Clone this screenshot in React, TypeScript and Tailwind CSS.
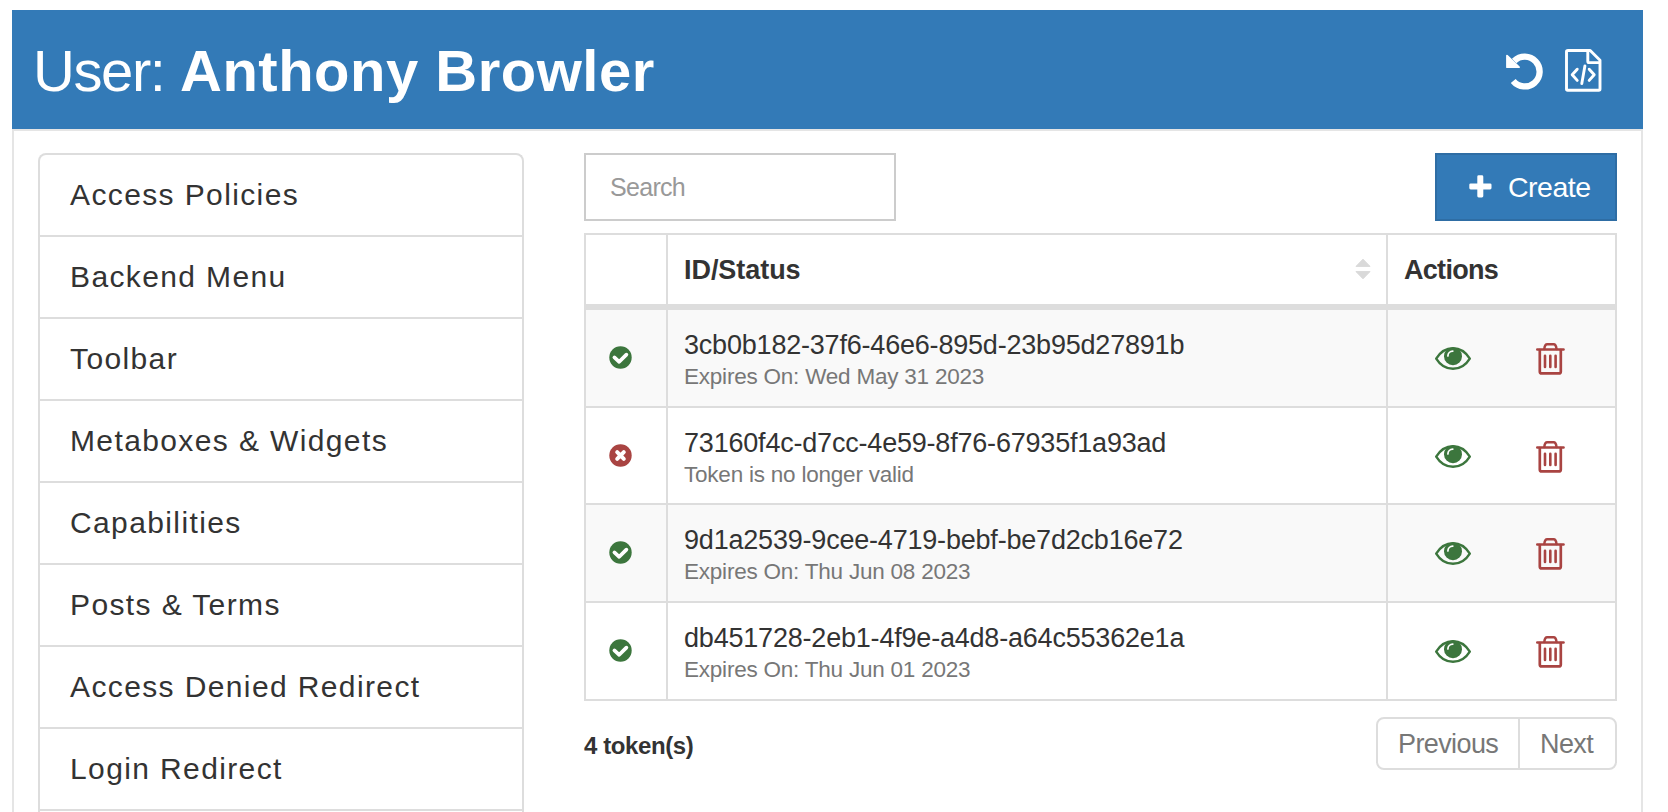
import type { ReactNode } from "react";

const menu = [
  "Access Policies",
  "Backend Menu",
  "Toolbar",
  "Metaboxes & Widgets",
  "Capabilities",
  "Posts & Terms",
  "Access Denied Redirect",
  "Login Redirect",
];

type Token = { id: string; note: string; valid: boolean; height: string };

const tokens: Token[] = [
  { id: "3cb0b182-37f6-46e6-895d-23b95d27891b", note: "Expires On: Wed May 31 2023", valid: true, height: "h-[98px]" },
  { id: "73160f4c-d7cc-4e59-8f76-67935f1a93ad", note: "Token is no longer valid", valid: false, height: "h-[97px]" },
  { id: "9d1a2539-9cee-4719-bebf-be7d2cb16e72", note: "Expires On: Thu Jun 08 2023", valid: true, height: "h-[98px]" },
  { id: "db451728-2eb1-4f9e-a4d8-a64c55362e1a", note: "Expires On: Thu Jun 01 2023", valid: true, height: "h-[98px]" },
];

function UndoIcon() {
  return (
    <svg className="h-[37px] w-[37px]" viewBox="0 0 37 37" fill="none">
      <path d="M8.2 8A14.9 14.9 0 1 1 7.2 28" stroke="#fff" strokeWidth="6.3" />
      <path d="M1 2.6v11.6h12z" fill="#fff" stroke="#fff" strokeWidth="1.8" strokeLinejoin="round" />
    </svg>
  );
}

function CodeFileIcon() {
  return (
    <svg
      className="h-[43px] w-[37px]"
      viewBox="0 0 37 43"
      fill="none"
      stroke="#fff"
      strokeWidth="2.9"
      strokeLinecap="round"
      strokeLinejoin="round"
    >
      <path d="M3 1.5H25.2L35 11.2V40Q35 41.2 33.8 41.2H2.7Q1.5 41.2 1.5 40V2.7Q1.5 1.5 3 1.5Z" />
      <path d="M22.8 1.6V12.2Q22.8 13.6 24.2 13.6H34.6" />
      <path d="M12.2 20.2L7.2 25.8L12.2 31.4M24.2 20.2L29.2 25.8L24.2 31.4M19.9 17L16.8 34.6" />
    </svg>
  );
}

function StatusIcon({ valid }: { valid: boolean }) {
  return (
    <svg className="h-[23px] w-[23px]" viewBox="0 0 23 23" fill="none">
      <circle cx="11.5" cy="11.5" r="11.2" fill={valid ? "#3c763d" : "#a94442"} />
      {valid ? (
        <path d="M5.4 11.4L10.2 15.8L17.4 8.6" stroke="#fff" strokeWidth="3.7" strokeLinecap="round" strokeLinejoin="round" />
      ) : (
        <path d="M8.2 8.2L14.8 14.8M14.8 8.2L8.2 14.8" stroke="#fff" strokeWidth="4" strokeLinecap="round" />
      )}
    </svg>
  );
}

function EyeIcon() {
  return (
    <svg className="h-[23px] w-9" viewBox="0 0 36 23" fill="none">
      <path
        d="M1.2 11.6C5 5.4 11 1.2 18 1.2S31 5.4 34.8 11.6C31 17.8 25 21.8 18 21.8S5 17.8 1.2 11.6Z"
        stroke="#3c763d"
        strokeWidth="2.4"
        strokeLinejoin="round"
      />
      <circle cx="18" cy="9.2" r="9" fill="#3c763d" />
      <path d="M12.9 8.9C12.9 6.2 15 4.2 17.8 4.1" stroke="#fff" strokeWidth="1.7" strokeLinecap="round" />
    </svg>
  );
}

function TrashIcon() {
  return (
    <svg className="h-8 w-[29px]" viewBox="0 0 29 32" fill="none" stroke="#a94442" strokeLinecap="round">
      <path d="M1.2 6.5H27.6" strokeWidth="2.4" />
      <path d="M8.3 6C8.6 3 9.6 1.3 11.2 1.3H17.6C19.2 1.3 20.2 3 20.5 6" strokeWidth="2.5" />
      <path d="M3.8 7V28.4Q3.8 30.4 5.8 30.4H22.8Q24.8 30.4 24.8 28.4V7" strokeWidth="2.7" />
      <path d="M9 12.8V24M14.3 12.8V24M19.6 12.8V24" strokeWidth="2.6" />
    </svg>
  );
}

function SortIcon() {
  return (
    <svg className="mb-px h-[22px] w-4" viewBox="0 0 16 22" fill="#d9d9d9" stroke="#d9d9d9" strokeLinejoin="round">
      <path d="M8 1.2L15 8.4H1z" />
      <path d="M8 20.8L15 13.6H1z" />
    </svg>
  );
}

function IconButton({ label, className, children }: { label: string; className: string; children: ReactNode }) {
  return (
    <button aria-label={label} className={`block ${className}`}>
      {children}
    </button>
  );
}

export default function App() {
  return (
    <div className="h-[812px] overflow-hidden bg-white pl-3 pt-[10px] font-['Liberation_Sans',Arial,sans-serif] text-[#333]">
      <div className="w-[1631px]">
        <header className="flex h-[119px] items-center bg-[#337ab7] pl-[21px] pr-[41px] text-[58px] leading-[119px] text-white">
          <h1 className="flex flex-1 pt-0.5 whitespace-nowrap">
            <span className="w-[147px] tracking-[-1.4px]">User:</span>
            <span className="font-bold tracking-[0.5px]">Anthony Browler</span>
          </h1>
          <IconButton label="Reset" className="mr-[22px] mt-1">
            <UndoIcon />
          </IconButton>
          <IconButton label="View code" className="mt-0.5">
            <CodeFileIcon />
          </IconButton>
        </header>

        <main className="flex h-[800px] items-start border-2 border-[#e5e5e5] pl-6 pt-[22px]">
          <nav className="h-[700px] w-[486px] overflow-hidden rounded-t-lg border-2 border-b-0 border-[#ddd]">
            {menu.map((label) => (
              <a
                key={label}
                className="block h-[82px] border-b-2 border-[#ddd] pl-[30px] text-[30px] leading-[80px] tracking-[1.38px]"
              >
                {label}
              </a>
            ))}
          </nav>

          <section className="ml-[60px] w-[1033px]">
            <div className="flex h-[68px] justify-between">
              <input
                placeholder="Search"
                className="w-[312px] border-2 border-[#ccc] pl-6 pt-0.5 text-[25px] tracking-[-0.7px] placeholder:text-[#999]"
              />
              <button className="flex w-[182px] items-center border-2 border-[#2e6da4] bg-[#337ab7] pl-8 text-[28.5px] tracking-[-0.5px] text-white">
                <svg className="mr-4 mb-0.5 h-[23px] w-[23px]" viewBox="0 0 23 23" fill="#fff">
                  <rect x="8.3" y="0.3" width="6" height="22.2" rx="1.4" />
                  <rect x="0.3" y="8.4" width="22.2" height="6" rx="1.4" />
                </svg>
                <span>Create</span>
              </button>
            </div>

            <div className="mt-3 border-x-2 border-t-2 border-[#ddd]">
              <div className="flex h-[75px] border-b-6 border-[#ddd] text-[27px] font-bold">
                <div className="w-[82px] border-r-2 border-[#ddd]" />
                <div className="flex w-[720px] items-center justify-between border-r-2 border-[#ddd] pl-4 pr-[15px] leading-[69px]">
                  <span className="pt-0.5 tracking-[-0.05px]">ID/Status</span>
                  <SortIcon />
                </div>
                <div className="pl-4 pt-px leading-[69px] tracking-[-0.7px]">Actions</div>
              </div>
              {tokens.map((t) => (
                <div key={t.id} className={`flex border-b-2 border-[#ddd] odd:bg-white even:bg-[#f9f9f9] ${t.height}`}>
                  <div className="flex w-[82px] items-start border-r-2 border-[#ddd] pl-[23px] pt-9">
                    <StatusIcon valid={t.valid} />
                  </div>
                  <div className="w-[720px] border-r-2 border-[#ddd] pl-4 pt-[19px]">
                    <div className="text-[27px] leading-8 tracking-[-0.2px]">{t.id}</div>
                    <div className="pt-px text-[22.5px] leading-[30px] tracking-[-0.22px] text-[#777]">{t.note}</div>
                  </div>
                  <div className="flex items-start pl-[47px]">
                    <IconButton label="View token" className="mt-[37px]">
                      <EyeIcon />
                    </IconButton>
                    <IconButton label="Delete token" className="ml-[65px] mt-[32.5px]">
                      <TrashIcon />
                    </IconButton>
                  </div>
                </div>
              ))}
            </div>

            <div className="mt-4 flex h-[53px] items-stretch justify-between">
              <div className="pt-0.5 text-2xl leading-[53px] font-bold tracking-[-0.4px]">4 token(s)</div>
              <div className="flex w-[241px] rounded-lg border-2 border-[#ddd] text-[27px] leading-[51px] tracking-[-0.6px] text-[#777]">
                <button className="h-[49px] w-[142px] border-r-2 border-[#ddd] pl-5 text-left">Previous</button>
                <button className="h-[49px] pl-5 text-left">Next</button>
              </div>
            </div>
          </section>
        </main>
      </div>
    </div>
  );
}
